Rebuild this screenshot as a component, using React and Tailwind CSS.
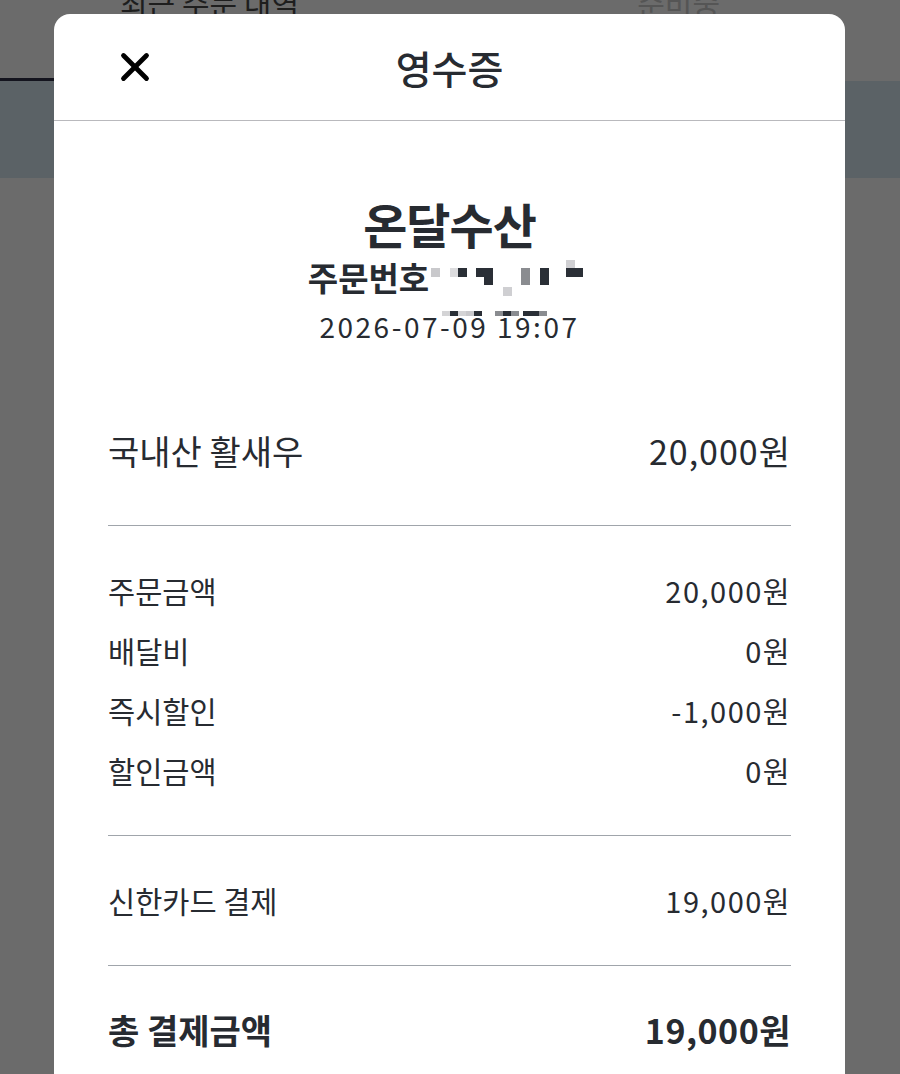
import { X } from 'lucide-react'

const FONT = { fontFamily: '"Noto Sans CJK KR", "Noto Sans", sans-serif' }

const CHARGES = [
  { label: '주문금액', value: '20,000원' },
  { label: '배달비', value: '0원' },
  { label: '즉시할인', value: '-1,000원' },
  { label: '할인금액', value: '0원' },
]

// blurred order number, drawn as mosaic blocks
const MOSAIC = [
  [0, 8, '#c9c9cc'], [19, 8, '#dcdcde'], [27, 8, '#2a2f36'],
  [45, 8, '#2a2f36'], [53, 8, '#2a2f36'], [53, 16, '#2a2f36'],
  [72, 27, '#cfcfd2'], [90, 8, '#8a8c90'], [90, 16, '#8a8c90'],
  [109, 8, '#2a2f36'], [109, 16, '#2a2f36'],
  [135, 0, '#cfcfd2'], [135, 8, '#2a2f36'], [143, 8, '#2a2f36'],
]

const DATE_TOP = [
  [0, '#d4d4d6'], [8, '#2a2f36'], [16, '#d4d4d6'], [24, '#c9c9cc'], [32, '#2a2f36'],
  [53, '#8a8c90'], [61, '#2a2f36'], [69, '#8a8c90'],
  [81, '#2a2f36'], [89, '#2a2f36'], [97, '#8a8c90'],
]

function Mosaic() {
  return (
    <svg width="160" height="36" viewBox="0 0 160 36" className="block">
      {MOSAIC.map(([x, y, c], i) => (
        <rect key={i} x={x} y={y} width="9" height="9" fill={c} />
      ))}
    </svg>
  )
}

function Row({ label, value }) {
  return (
    <div className="flex items-center justify-between leading-[40px]">
      <span className="text-[29.5px]">{label}</span>
      <span className="text-[29px] tracking-[1.5px]">{value}</span>
    </div>
  )
}

export default function App() {
  return (
    <div className="relative w-[900px] h-[1074px] overflow-hidden bg-[#6b6b6b]" style={FONT}>
      {/* page behind the sheet */}
      <div className="h-[78px] overflow-hidden">
        <div className="flex justify-between pl-[120px] pr-[180px] -mt-[18px] text-[30px] leading-[40px] text-[#1e1e1e]">
          <span>최근 주문 내역</span>
          <span className="text-[#555]">준비중</span>
        </div>
      </div>
      <div className="w-[60px] h-[3px] bg-[#14141e]" />
      <div className="h-[97px] bg-[#5b6266]" />

      {/* receipt sheet */}
      <div className="absolute left-[54px] top-[14px] bottom-0 w-[791px] bg-white rounded-t-[16px] text-[#272b31]">
        <div className="relative flex h-[107px] items-center justify-center border-b border-[#b9b9bd]">
          <X className="absolute left-[58px] top-[30px] text-black" size={46} strokeWidth={2.5} />
          <span className="text-[39px] font-medium leading-[48px]">영수증</span>
        </div>

        <div className="px-[54px]">
          <div className="flex flex-col items-center pt-[76px]">
            <div className="text-[48px] font-bold leading-[52px] tracking-[-1px]">온달수산</div>
            <div className="mt-[9px] flex items-center">
              <span className="text-[33px] font-bold leading-[38px]">주문번호</span>
              <div className="mt-[2px] ml-[2px]">
                <Mosaic />
              </div>
            </div>
            <div className="relative mt-[12px] text-[28px] leading-[36px] tracking-[2.5px]">
              2026-07-09 19:07
              <svg width="110" height="6" className="absolute left-[122px] top-[3px]">
                {DATE_TOP.map(([x, c], i) => (
                  <rect key={i} x={x} y="0" width="8" height="5" fill={c} />
                ))}
              </svg>
            </div>
          </div>

          <div className="mt-[87px] pb-[54px] border-b border-[#a0a5ab]">
            <div className="flex items-center justify-between leading-[40px]">
              <span className="text-[34px]">국내산 활새우</span>
              <span className="text-[34px] tracking-[1px]">20,000원</span>
            </div>
          </div>

          <div className="flex flex-col gap-[20px] pt-[44px] pb-[45px] border-b border-[#a0a5ab]">
            {CHARGES.map(c => (
              <Row key={c.label} {...c} />
            ))}
          </div>

          <div className="pt-[44px] pb-[45px] border-b border-[#a0a5ab]">
            <Row label="신한카드 결제" value="19,000원" />
          </div>

          <div className="pt-[44px]">
            <div className="flex items-center justify-between leading-[40px] font-bold">
              <span className="text-[34px]">총 결제금액</span>
              <span className="text-[34px] tracking-[0.5px]">19,000원</span>
            </div>
          </div>
        </div>
      </div>
    </div>
  )
}
